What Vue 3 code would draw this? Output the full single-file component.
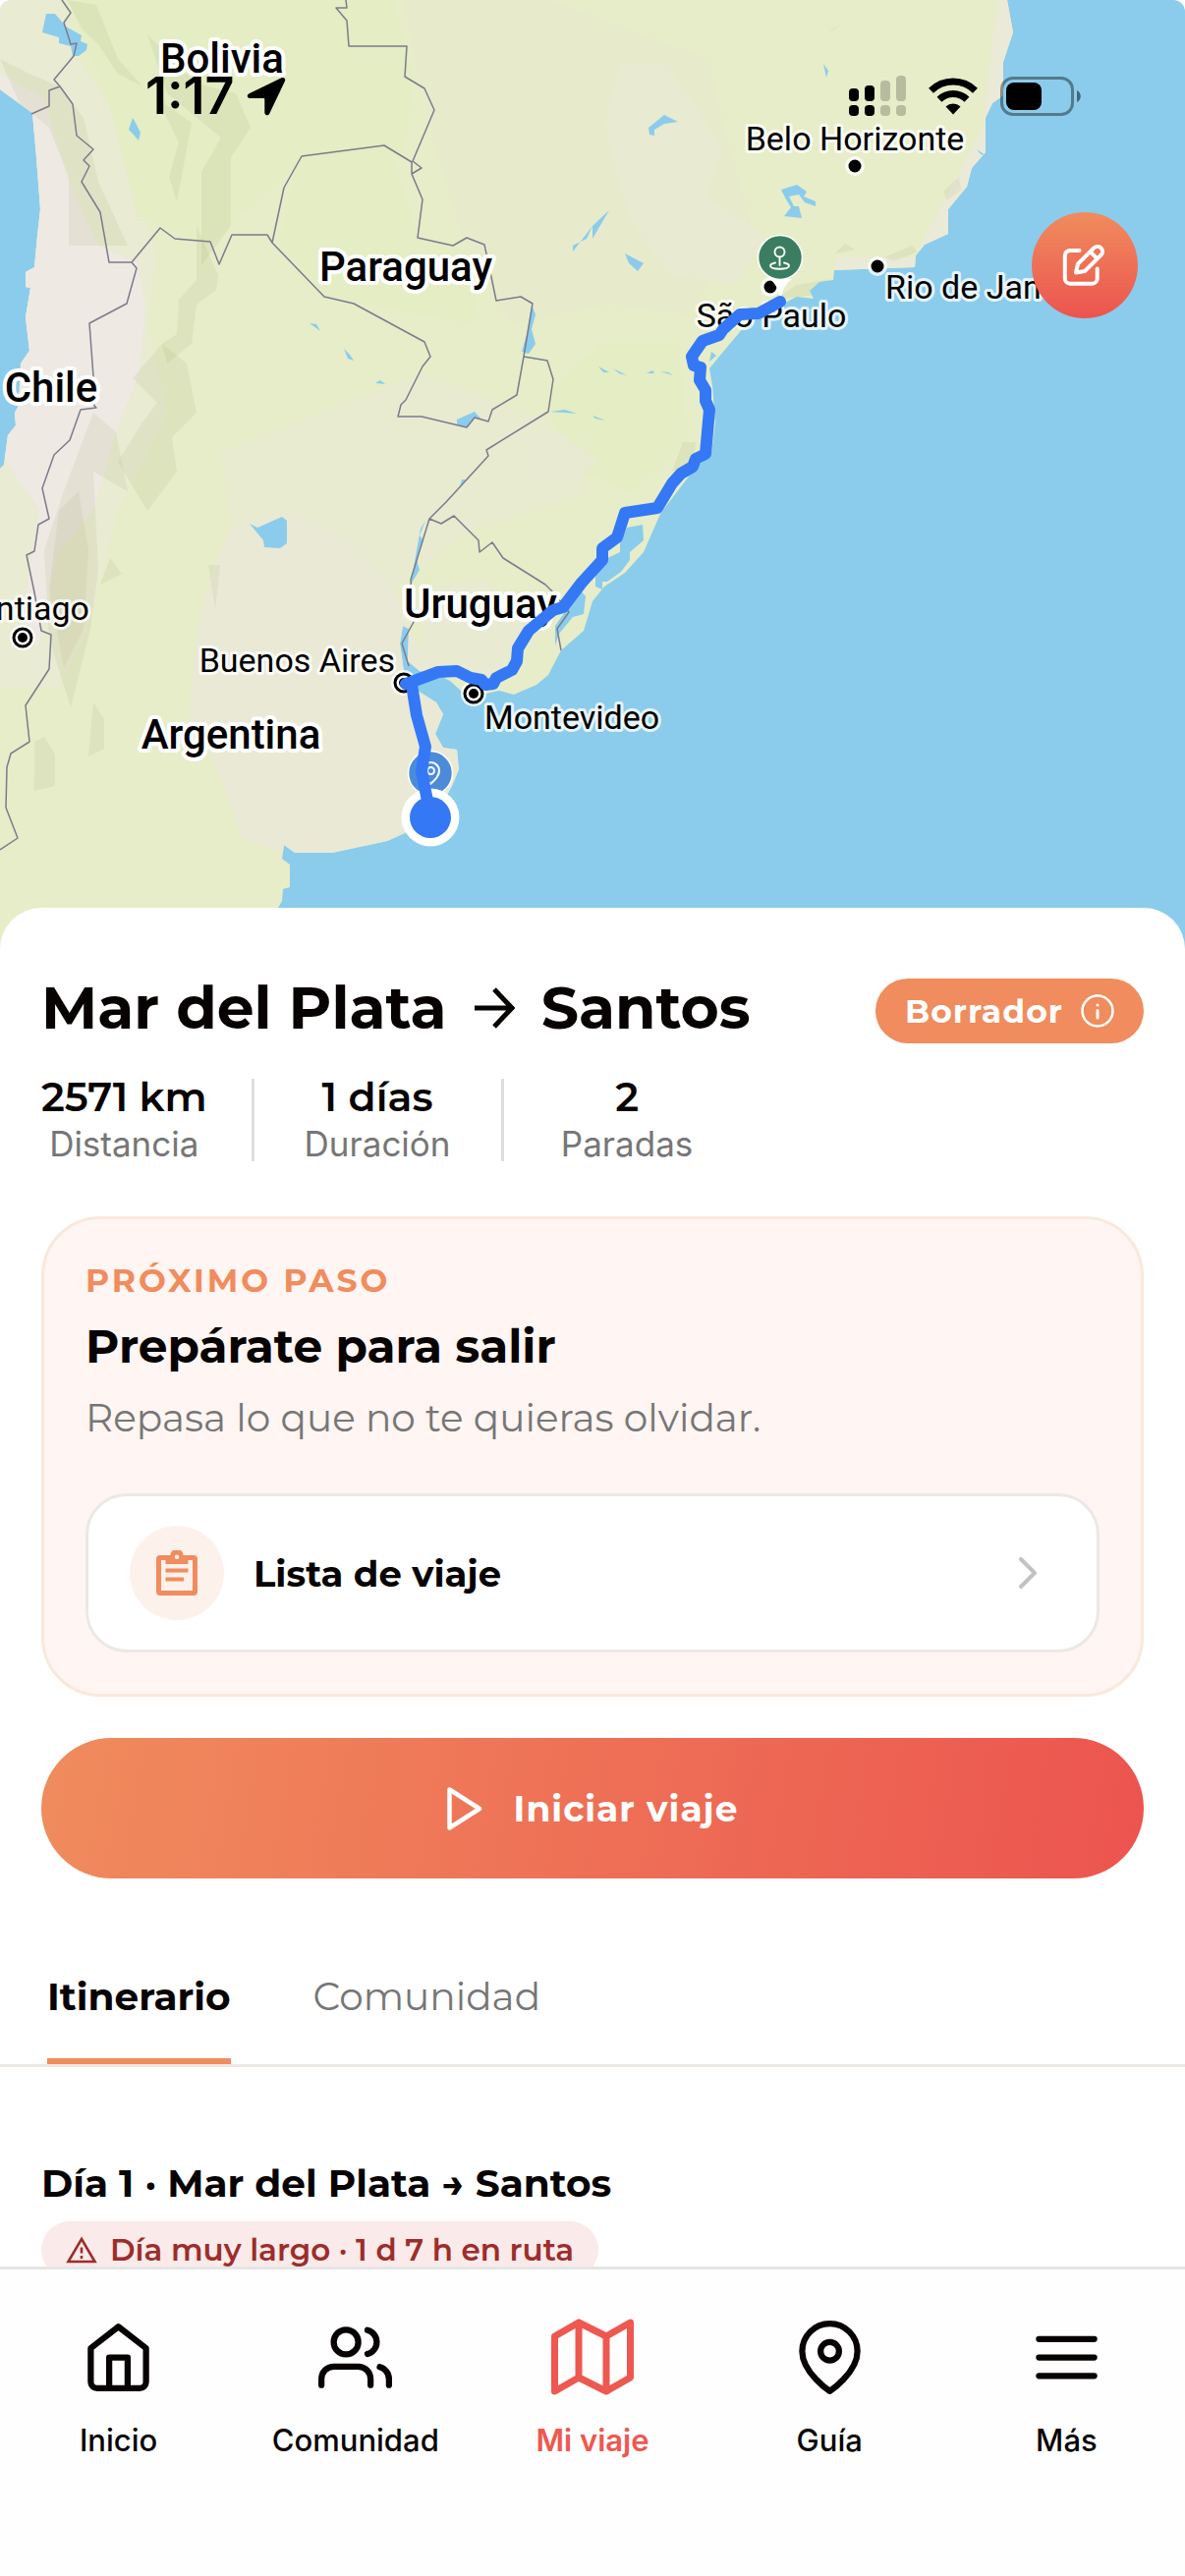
<template>
  <div class="app">
    <div class="scroll">
      <header class="hero">
        <svg class="map" viewBox="0 0 1206 966" preserveAspectRatio="xMidYMin slice" role="img" aria-label="Mapa de la ruta">
          <rect width="1206" height="966" fill="#8bccec" />
          <clipPath id="land-clip"><path :d="land" /></clipPath>
          <path :d="land" fill="#e6edc8" />
          <g clip-path="url(#land-clip)">
            <path v-for="(s, i) in terrain" :key="i" :d="s.d" :fill="s.fill" />
            <path v-for="(d, i) in shadows" :key="'s' + i" :d="d" fill="#8f8f58" fill-opacity="0.1" />
          </g>
          <path :d="lakes" fill="#8bccec" />
          <path :d="borders" fill="none" stroke="#7b7b8e" stroke-width="1.5" stroke-linejoin="round" />

          <g v-for="c in capitals" :key="c.x">
            <circle :cx="c.x" :cy="c.y" r="13" fill="#fff" fill-opacity="0.8" />
            <circle :cx="c.x" :cy="c.y" r="9" fill="#fff" stroke="#000" stroke-width="3" />
            <circle :cx="c.x" :cy="c.y" r="5" fill="#000" />
          </g>
          <g v-for="c in cities" :key="c.x">
            <circle :cx="c.x" :cy="c.y" r="10" fill="#fff" fill-opacity="0.75" />
            <circle :cx="c.x" :cy="c.y" r="6.5" fill="#000" />
          </g>
          <text
            v-for="l in labels"
            :key="l.text"
            :x="l.x"
            :y="l.y"
            :text-anchor="l.anchor || 'start'"
            :class="l.country ? 'country' : 'city'"
          >{{ l.text }}</text>

          <path d="M783 284q9 5 11 22 3-16 12-22z" fill="#fff" />
          <circle cx="794" cy="262" r="22.5" fill="#3a7d60" stroke="#fff" stroke-width="1.6" />
          <g fill="none" stroke="#fff" stroke-width="1.9" stroke-linecap="round">
            <circle cx="793.5" cy="256.5" r="5" />
            <path d="M793.5 262v8" />
            <path d="M789 267.5c-3 .6-5 1.6-5 3 0 2 4 3.2 9.5 3.2s9.5-1.2 9.5-3.2c0-1.4-2-2.4-5-3" />
          </g>

          <circle cx="438" cy="787" r="22.5" fill="#4c8bd9" stroke="#fff" stroke-width="1.6" />
          <g fill="none" stroke="#fff" stroke-width="2">
            <path d="M438 798c-5-4-8-9-8-13.5a8.5 8.5 0 0 1 17 0c0 4.5-4 9.5-9 13.5z" />
            <circle cx="438.5" cy="784.5" r="3.5" />
          </g>
          <circle cx="438" cy="832" r="29.5" fill="#fff" />
          <path :d="route" fill="none" stroke="#3478f6" stroke-width="12" stroke-linecap="round" stroke-linejoin="round" />
          <circle cx="438" cy="832" r="21" fill="#3478f6" />
        </svg>

        <div class="status">
          <div class="clock">
            <span>1:17</span>
            <svg width="40" height="40" viewBox="0 0 40 40"><path d="M35.5 1.3 2.6 17.2C-.4 18.7.4 22 3.8 22H17.5c.5 0 .8.3.8.8V36c0 3.6 3.5 4.5 5 1.4L39 4.4c1-2.2-1-4.3-3.5-3.1z" /></svg>
          </div>
          <div class="signals">
            <svg width="58" height="42" viewBox="0 0 58 42">
              <g><rect y="13" width="10" height="13" rx="4" /><rect x="16" y="10" width="10" height="16" rx="4" /><rect y="30" width="10" height="11" rx="4" /><rect x="16" y="30" width="10" height="11" rx="4" /></g>
              <g opacity="0.2"><rect x="32" y="5" width="10" height="21" rx="4" /><rect x="48" width="10" height="26" rx="4" /><rect x="32" y="30" width="10" height="11" rx="4" /><rect x="48" y="30" width="10" height="11" rx="4" /></g>
            </svg>
            <svg width="50" height="38" viewBox="0 0 50 38">
              <g fill="none" stroke="#000" stroke-width="7"><path d="M2.5 13.2a32 32 0 0 1 45 0" /><path d="M11 22.3a20 20 0 0 1 28 0" /></g>
              <path d="M17.5 29.5a11 11 0 0 1 15 0L25 37.5z" />
            </svg>
            <svg width="83" height="40" viewBox="0 0 83 40">
              <rect x="1.5" y="1.5" width="72" height="37" rx="11.5" fill="none" stroke="#000" stroke-opacity="0.4" stroke-width="3" />
              <rect x="6" y="6" width="36" height="28" rx="8" />
              <path d="M78 14c5 2 5 10 0 12z" opacity="0.5" />
            </svg>
          </div>
        </div>

        <button class="edit" aria-label="Editar viaje">
          <svg width="48" height="48" viewBox="0 0 48 48" fill="none" stroke="#fff" stroke-width="4" stroke-linecap="round" stroke-linejoin="round">
            <path d="M18.5 9H9a5.2 5.2 0 0 0-5.2 5.2V37.5a5.2 5.2 0 0 0 5.2 5.2H31.5a5.2 5.2 0 0 0 5.2-5.2V27.5" />
            <path d="M33.5 6.2a5.1 5.1 0 0 1 7.2 7.2L24 30l-9 1.5 2-8.8zM29.5 10.2l7.2 7.2" />
          </svg>
        </button>
      </header>

      <main class="sheet">
        <div class="title-row">
          <h1>
            <span>Mar del Plata</span>
            <svg width="42" height="42" viewBox="0 0 42 42" fill="none" stroke="#080303" stroke-width="5"><path d="M1 21h37M21 2l18 19-18 19" /></svg>
            <span>Santos</span>
          </h1>
          <button class="badge">
            Borrador
            <svg width="34" height="34" viewBox="0 0 34 34" fill="none" stroke="#fff" stroke-width="2.5" stroke-linecap="round"><circle cx="17" cy="17" r="15.5" /><path d="M17 16.5v7.5M17 11v.1" stroke-width="3" /></svg>
          </button>
        </div>

        <dl class="stats">
          <div v-for="s in stats" :key="s.label" class="stat">
            <dt>{{ s.label }}</dt>
            <dd>{{ s.value }}</dd>
          </div>
        </dl>

        <section class="next">
          <p class="eyebrow">PRÓXIMO PASO</p>
          <h2>Prepárate para salir</h2>
          <p class="hint">Repasa lo que no te quieras olvidar.</p>
          <a href="#lista" class="task">
            <span class="task-icon">
              <svg width="42" height="46" viewBox="0 0 42 46" fill="#f08c5d">
                <path fill-rule="evenodd" d="M4 5h10.5a6.5 6.5 0 0 1 13 0H38a4 4 0 0 1 4 4v33a4 4 0 0 1-4 4H4a4 4 0 0 1-4-4V9a4 4 0 0 1 4-4zm1 5v31h32V10h-4.5v4h-23v-4zM21 4.5a2.3 2.3 0 1 0 0 4.6 2.3 2.3 0 0 0 0-4.6z" />
                <path d="M9.5 18.5h23v4h-23zM9.5 27.5h18.5v4H9.5z" />
              </svg>
            </span>
            <span class="task-name">Lista de viaje</span>
            <svg width="18" height="32" viewBox="0 0 18 32" fill="none" stroke="#c4c2c0" stroke-width="4" stroke-linecap="round" stroke-linejoin="round"><path d="M2 2l14 14L2 30" /></svg>
          </a>
        </section>

        <button class="start">
          <svg width="36" height="44" viewBox="0 0 36 44" fill="none" stroke="#fff" stroke-width="4.5" stroke-linejoin="round"><path d="M2.5 2.5v39L33 22z" /></svg>
          Iniciar viaje
        </button>

        <nav class="tabs">
          <button
            v-for="t in tabs"
            :key="t"
            class="tab"
            :class="{ active: t === activeTab }"
            @click="activeTab = t"
          >{{ t }}</button>
        </nav>

        <section class="day">
          <h3>Día 1 · Mar del Plata → Santos</h3>
          <p class="warning">
            <svg width="32" height="28" viewBox="0 0 32 28" fill="none" stroke="#9c2d2b" stroke-width="2.6"><path d="M16 3 29.5 26h-27zM16 11.5v6M16 20v3" /></svg>
            Día muy largo · 1 d 7 h en ruta
          </p>
        </section>
      </main>
    </div>

    <nav class="bottom-nav">
      <a
        v-for="item in navItems"
        :key="item.label"
        href="#"
        class="nav-item"
        :class="{ current: item.current }"
      >
        <span class="nav-icon">
          <svg viewBox="0 0 24 24" fill="none" stroke="currentColor" stroke-width="2" stroke-linecap="round" stroke-linejoin="round"><path :d="item.icon" /></svg>
        </span>
        {{ item.label }}
      </a>
    </nav>
  </div>
</template>

<script setup>
import { ref } from 'vue'

const tabs = ['Itinerario', 'Comunidad']
const activeTab = ref('Itinerario')

const stats = [
  { value: '2571 km', label: 'Distancia' },
  { value: '1 días', label: 'Duración' },
  { value: '2', label: 'Paradas' },
]

const navItems = [
  { label: 'Inicio', icon: 'M3 9l9-7 9 7v11a2 2 0 0 1-2 2H5a2 2 0 0 1-2-2zM9 22V12h6v10' },
  { label: 'Comunidad', icon: 'M17 21v-2a4 4 0 0 0-4-4H5a4 4 0 0 0-4 4v2M5 7a4 4 0 1 0 8 0a4 4 0 1 0-8 0M23 21v-2a4 4 0 0 0-3-3.87M16 3.13a4 4 0 0 1 0 7.75' },
  { label: 'Mi viaje', current: true, icon: 'M1 6v16l7-4 8 4 7-4V2l-7 4-8-4zM8 2v16M16 6v16' },
  { label: 'Guía', icon: 'M21 10c0 7-9 13-9 13s-9-6-9-13a9 9 0 0 1 18 0zM9 10a3 3 0 1 0 6 0a3 3 0 1 0-6 0' },
  { label: 'Más', icon: 'M3 12h18M3 6h18M3 18h18' },
]

const labels = [
  { text: 'Bolivia', x: 226, y: 74, country: true, anchor: 'middle' },
  { text: 'Paraguay', x: 413, y: 286, country: true, anchor: 'middle' },
  { text: 'Chile', x: 52, y: 409, country: true, anchor: 'middle' },
  { text: 'Uruguay', x: 489, y: 629, country: true, anchor: 'middle' },
  { text: 'Argentina', x: 235, y: 762, country: true, anchor: 'middle' },
  { text: 'Belo Horizonte', x: 870, y: 153, anchor: 'middle' },
  { text: 'São Paulo', x: 785, y: 333, anchor: 'middle' },
  { text: 'Rio de Janeiro', x: 901, y: 304 },
  { text: 'Buenos Aires', x: 402, y: 684, anchor: 'end' },
  { text: 'Montevideo', x: 493, y: 742 },
  { text: 'Santiago', x: 91, y: 631, anchor: 'end' },
]

const capitals = [
  { x: 23, y: 649 },
  { x: 411, y: 695 },
  { x: 482, y: 706 },
]

const cities = [
  { x: 784, y: 292 },
  { x: 870, y: 169 },
  { x: 893, y: 271 },
]

const land =
  'M0 0H1025L1031 33 1021 63 1021 97 1010 105 1003 120 1003 155 989 171 984 190 965 213 965 238 941 249 932 260 931 272 849 275 848 285 834 287 824 296 828 304 811 302 799 308 772 322 757 333 736 358 722 375 725 393 728 430 724 462 707 477 672 523 655 562 636 583 615 597 603 612 594 642 571 662 558 687 546 697 523 707 508 703 485 708 469 703 458 693 446 687 427 683 415 673 416 640 410 637 407 655 412 690 425 703 444 715 451 727 443 747 451 761 465 763 467 783 460 800 442 833 412 848 394 856 338 868 300 868 289 860 287 874 295 880 295 903 288 905 287 917 283 924V966H0V477L4 473 8 443 16 433 15 420 19 413 21 370 30 357 26 323 31 293 26 292 26 277 35 272 38 240 41 213 37 160 33 115 0 91Z'

const terrain = [
  { d: 'M0 0H62L80 60 120 120 140 200 160 260 150 330 170 420 120 520 90 640 60 700H0Z', fill: '#e9ebd2' },
  { d: 'M70 0H400L420 80 410 160 300 170 210 250 140 220 110 100Z', fill: '#e4edc3' },
  { d: 'M0 75 45 100 68 180 100 250 140 268 148 310 142 380 118 440 95 520 60 560 38 660 20 640 40 520 0 460Z', fill: '#eee9e2' },
  { d: 'M225 460 430 380 560 430 600 500 480 540 400 600 310 540 235 530Z', fill: '#e8ebd0' },
  { d: 'M235 535 296 523 346 548 369 573 402 600 416 640 470 720 470 800 394 860 300 874 246 853 220 780 192 727 200 647 212 593Z', fill: '#eae9d6' },
  { d: 'M410 0 560 0 720 60 740 140 765 230 700 320 620 310 520 330 470 240 440 140Z', fill: '#e7ebcc' },
  { d: 'M630 65H680L735 150 720 200 780 240 750 290 680 280 640 220 615 130Z', fill: '#e8ead1' },
  { d: 'M300 170 400 160 425 240 490 260 480 330 330 300 285 245Z', fill: '#e4edc3' },
  { d: 'M610 350 690 350 700 450 640 500 570 470 560 400Z', fill: '#e4edc3' },
  { d: 'M535 450 570 440 610 470 580 495 540 480Z', fill: '#e9ead2' },
  { d: 'M430 600 490 590 540 620 520 690 430 680Z', fill: '#e8ead1' },
  { d: 'M1015 0H1040V120L965 260 930 275H850V262L930 262 955 215 1000 130Z', fill: '#ebead8' },
]

const shadows = [
  'M68 0 98 5 120 60 145 88 120 75 100 45 84 30Z',
  'M0 60 30 75 60 88 85 120 100 185 130 250H70V180L50 130 20 105Z',
  'M150 35 175 60 200 85 240 95 255 130 235 160V230L205 270 205 175 225 140 170 95Z',
  'M160 100 195 125 180 205 172 180 182 145Z',
  'M200 230 222 280 220 295 200 310 195 350 170 370 165 350 180 340 182 305 200 285Z',
  'M135 385 165 350 190 370 200 420 175 445 180 480 150 520 120 470 145 430 160 410Z',
  'M95 420 118 440 130 500 95 480 100 580 92 640 72 720 50 650 45 560 65 500Z',
  'M60 520 80 500 90 560 85 640 65 680 50 600Z',
  'M212 575H224L219 620ZM102 595 112 568 124 584Z',
  'M95 715 106 732V762L90 770Z',
  'M35 790V755L45 750 56 768V800L34 805Z',
  'M960 195 976 180 978 193 964 204ZM850 258 860 248 870 254ZM900 262 928 250 934 256 910 266Z',
  'M790 305 810 290 846 284 830 300ZM684 480 695 450 708 450 706 470Z',
]

const lakes = [
  'M47 14 56 14 67 27 83 36 82 42 89 45 88 51 80 57 74 57 72 47 60 44 60 38 43 33Z',
  'M135 120 138 125 143 135 141 143 135 136 131 132Z',
  'M254 533 262 537 287 526 292 530 292 553 285 558 269 557 268 550Z',
  'M541 310 545 320 541 335 545 350 538 360 531 358 536 340Z',
  'M465 427 483 419 490 427 483 425 476 435 465 432Z',
  'M315 329 322 330 326 337ZM350 355 356 361 360 367 354 365ZM382 390 387 387 392 391Z',
  'M560 419 575 417 587 421 575 420ZM609 373 620 379 614 379ZM624 375 638 382 630 380ZM658 380 664 377 666 380ZM672 378 685 382 680 379Z',
  'M660 130 676 117 690 124 676 126 666 132 666 138 661 137Z',
  'M795 193 811 188 821 195 818 200 830 205 830 210 819 206 813 198 803 200 808 210 813 210 816 222 798 220 805 211 800 203Z',
  'M636 258 655 268 649 276 640 268ZM620 214 603 243V230ZM603 230 583 256V250L597 243Z',
  'M838 65 843 72 841 79ZM844 32 856 25 848 30ZM603 423 616 428 606 426Z',
  'M638 537 654 534 655 550 641 562 641 570 632 582 618 592 613 592 613 600 606 597 606 587 618 568 631 562 631 553Z',
  'M590 600 596 607 594 625 583 628 569 645 565 657 565 637 577 620Z',
  'M433 530 427 545 431 550 424 570 427 580 418 595 424 560 428 538ZM470 488 474 488 468 496Z',
  'M724 358 729 362 722 368ZM994 152 1003 158 998 157Z',
].join('')

const borders = [
  'M63 0 72 13 65 23 72 45 78 44 75 57 55 81 61 88 74 106 78 138 95 152 85 163 91 169 83 185 102 216 111 267H134L139 273 129 309 91 329 95 383 96 413 98 415 82 417 71 448 55 463 49 480 43 497 50 528 39 534 35 561 27 565 35 603 42 642 52 646 50 681 26 718 30 755 11 767 7 781 6 822 18 853 0 865',
  'M61 88 50 92V108L32 116',
  'M134 267 163 232 178 243 214 246 223 269 236 239H272L277 247 330 302 360 309 432 348 438 363 430 373 413 407 408 412 405 424H429L475 435 483 425 497 429 501 417 526 402 533 363 542 309 530 302 505 306 499 277 493 249 475 242 461 250 425 242 430 203 419 177 429 171 420 164 442 112 432 90 412 78 414 47H355L353 21 342 8H353L352 0',
  'M277 247 289 191 307 159 391 148 419 165V177',
  'M533 363 557 367 563 386 558 419 495 458 497 464 454 511 437 528 418 590 421 633 409 655 416 678',
  'M437 528 449 533 462 525 487 550 488 562 501 552 512 568 555 595 563 603 579 623 567 640 571 662',
].join('')

const route =
  'M794 307 772 319 753 320 736 335 732 341 715 347 704 363 706 372 713 374 712 387 718 397 718 408 722 417 718 462 708 467 705 475 693 482 684 492 669 517 636 522 628 547 613 558V570L592 593 573 618 563 621 538 642 527 660 526 673 521 682 505 690 502 696 494 697 490 692 479 690 465 683 446 684 419 694 413 696 419 697 424 728 433 760 429 785 435 815'
</script>

<style>
body {
  margin: 0;
  background: #fff;
}
</style>

<style scoped>
.app {
  height: 100vh;
  display: flex;
  flex-direction: column;
  background: #fff;
  color: #080303;
  font-family: Montserrat, Inter, "Liberation Sans", sans-serif;
}

.app * {
  box-sizing: border-box;
}

h1, h2, h3, p, dl, dd {
  margin: 0;
}

button {
  border: none;
  padding: 0;
  background: none;
  color: inherit;
  font: inherit;
  cursor: pointer;
}

a {
  color: inherit;
  text-decoration: none;
}

svg {
  flex-shrink: 0;
}

.scroll {
  flex: 1;
  min-height: 0;
  overflow-y: auto;
  scrollbar-width: none;
}

/* map header */
.hero {
  position: relative;
  overflow: hidden;
  border-radius: 12px 12px 0 0;
}

.map {
  display: block;
  width: 100%;
}

.map text {
  font-family: Roboto, "Liberation Sans", sans-serif;
  fill: #000;
  stroke: #fff;
  stroke-linejoin: round;
  paint-order: stroke;
}

.country {
  font-size: 42px;
  font-weight: 500;
  stroke-width: 8px;
}

.city {
  font-size: 34px;
  stroke-width: 6px;
  stroke-opacity: 0.8;
}

.status {
  position: absolute;
  top: 74px;
  left: 0;
  right: 0;
  display: flex;
  justify-content: space-between;
  align-items: center;
  height: 48px;
  padding: 0 105px 0 148px;
}

.clock {
  display: flex;
  align-items: center;
  gap: 12px;
  font-family: Inter, sans-serif;
  font-size: 52px;
  font-weight: 600;
  line-height: 48px;
  color: #000;
}

.signals {
  display: flex;
  align-items: center;
  gap: 23px;
}

.edit {
  position: absolute;
  top: 216px;
  right: 48px;
  display: flex;
  align-items: center;
  justify-content: center;
  width: 108px;
  height: 108px;
  border-radius: 50%;
  background: linear-gradient(#f08c5d, #ec544f);
}

/* sheet */
.sheet {
  position: relative;
  margin-top: -42px;
  padding-top: 66px;
  border-radius: 42px 42px 0 0;
  background: #fff;
}

.title-row,
.stats,
.next,
.start,
.day {
  margin-left: 42px;
  margin-right: 42px;
}

.title-row {
  display: flex;
  align-items: flex-end;
  justify-content: space-between;
}

h1 {
  display: flex;
  align-items: center;
  gap: 27px;
  font-size: 60px;
  font-weight: 700;
  line-height: 72px;
}

.badge {
  display: flex;
  align-items: center;
  gap: 18px;
  padding: 0 30px;
  border-radius: 33px;
  background: #f08c5d;
  color: #fff;
  font-size: 33px;
  font-weight: 700;
  line-height: 66px;
  letter-spacing: 1px;
}

.stats {
  display: flex;
  margin-top: 36px;
}

.stat {
  display: flex;
  flex-direction: column-reverse;
  gap: 12px;
  min-width: 254px;
  padding: 0 45px;
  text-align: center;
}

.stat:first-child {
  min-width: 0;
  padding-left: 0;
}

.stat + .stat {
  border-left: 3px solid #dedede;
}

.stat dt {
  font-family: Inter, sans-serif;
  font-size: 35px;
  line-height: 36px;
  color: #767676;
}

.stat dd {
  font-size: 41px;
  font-weight: 600;
  line-height: 36px;
}

.next {
  margin-top: 56px;
  padding: 41px 42px 42px;
  border: 3px solid #fae8dd;
  border-radius: 60px;
  background: #fff5f2;
}

.eyebrow {
  color: #f08c5d;
  font-size: 33px;
  font-weight: 700;
  line-height: 42px;
  letter-spacing: 3px;
}

h2 {
  margin-top: 17px;
  font-size: 47px;
  font-weight: 700;
  line-height: 60px;
}

.hint {
  margin-top: 15px;
  font-size: 39px;
  line-height: 54px;
  color: #767676;
}

.task {
  display: flex;
  align-items: center;
  gap: 30px;
  margin-top: 50px;
  padding: 30px 61px 30px 42px;
  border: 3px solid #ece8e5;
  border-radius: 42px;
  background: #fff;
}

.task-icon {
  display: flex;
  align-items: center;
  justify-content: center;
  width: 96px;
  height: 96px;
  border-radius: 50%;
  background: #fdf1eb;
}

.task-name {
  flex: 1;
  font-size: 37px;
  font-weight: 700;
}

.start {
  display: flex;
  align-items: center;
  justify-content: center;
  gap: 32px;
  width: calc(100% - 84px);
  height: 143px;
  margin-top: 42px;
  border-radius: 72px;
  background: linear-gradient(100deg, #f08c5d, #ec544f);
  color: #fff;
  font-size: 36px;
  font-weight: 700;
  letter-spacing: 1px;
}

.tabs {
  display: flex;
  gap: 84px;
  margin-top: 96px;
  padding: 0 48px;
  border-bottom: 3px solid #ece8e5;
}

.tab {
  padding-bottom: 39px;
  border-bottom: 6px solid transparent;
  font-size: 39px;
  line-height: 48px;
  color: #767676;
}

.tab.active {
  border-image: linear-gradient(#f08c5d, #f08c5d) 1;
  font-weight: 700;
  color: #080303;
}

.day {
  margin-top: 94px;
}

h3 {
  font-size: 39px;
  font-weight: 700;
  line-height: 48px;
}

.warning {
  display: inline-flex;
  align-items: center;
  gap: 13px;
  margin-top: 15px;
  padding: 11px 25px;
  border-radius: 30px;
  background: #faeaea;
  color: #9c2d2b;
  font-size: 31px;
  font-weight: 600;
  line-height: 36px;
}

/* bottom bar */
.bottom-nav {
  position: relative;
  display: grid;
  grid-template-columns: repeat(5, 1fr);
  padding: 47px 0 120px;
  border-top: 3px solid #e5e5e5;
  background: #fefefe;
}

.nav-item {
  display: flex;
  flex-direction: column;
  align-items: center;
  gap: 25px;
  font-family: Inter, sans-serif;
  font-size: 31px;
  font-weight: 500;
  line-height: 36px;
}

.nav-icon {
  display: flex;
  align-items: center;
  justify-content: center;
  height: 84px;
}

.nav-icon svg {
  width: 75px;
  height: 75px;
}

.current {
  color: #ee5850;
  font-weight: 600;
}

.current .nav-icon svg {
  width: 84px;
  height: 84px;
}
</style>
